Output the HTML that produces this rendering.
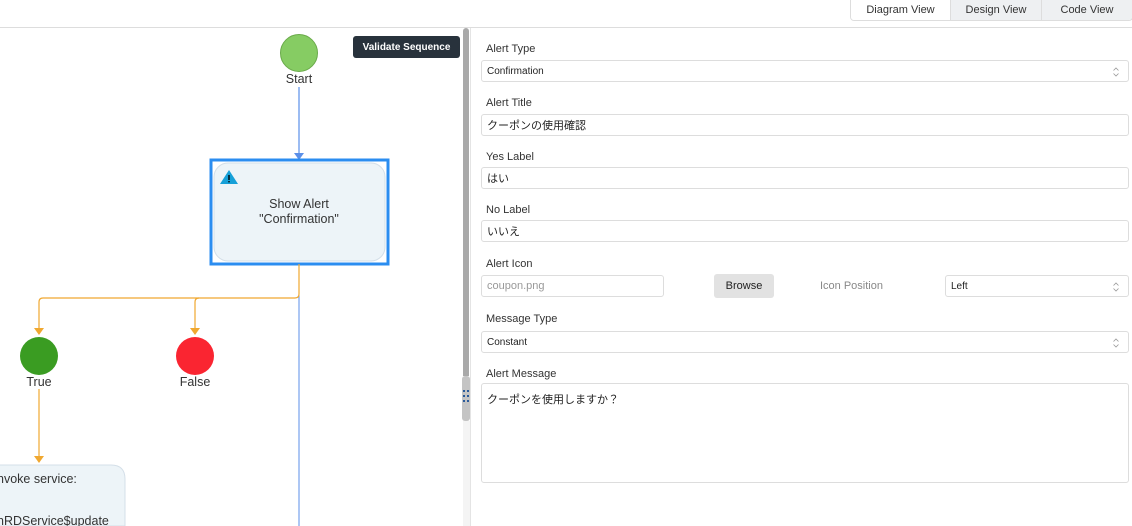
<!DOCTYPE html>
<html><head><meta charset="utf-8"><style>
*{box-sizing:border-box;margin:0;padding:0}
body{width:1132px;height:526px;overflow:hidden;background:#fff;font-family:"Liberation Sans","Noto Sans CJK JP",sans-serif;position:relative;color:#333}
.abs{position:absolute}
.tabs{left:850px;top:0;width:283px;height:21px;border:1px solid #ddd;border-top:none;border-radius:0 0 4px 4px;display:flex;font-size:11px;overflow:hidden}
.tabs div{flex:1;text-align:center;line-height:20px;border-left:1px solid #ddd;background:#eef0f2}
.tabs div:first-child{border-left:none;background:#fff;flex:1.1}
.lbl{font-size:11px;color:#333;left:486px}
.in{border:1px solid #ddd;border-radius:3px;height:22px;font-size:10px;display:flex;align-items:center;padding-left:5px;color:#222;background:#fff}
.arr{position:absolute;right:8px;top:5px}
</style></head><body>
<div class="abs" style="left:0;top:27px;width:1132px;height:1px;background:#ddd"></div>
<div class="abs tabs"><div>Diagram View</div><div>Design View</div><div>Code View</div></div>

<div class="abs" style="left:463px;top:28px;width:6px;height:348px;background:#a9a9a9;border-radius:3px 3px 0 0"></div>
<div class="abs" style="left:462px;top:376px;width:8px;height:45px;background:#c4c4c4;border-radius:3px"></div>
<div class="abs" style="left:463px;top:421px;width:7px;height:105px;background:#f4f4f4"></div>
<div class="abs" style="left:470px;top:28px;width:1px;height:498px;background:#e4e4e4"></div>
<svg class="abs" style="left:462px;top:388px" width="8" height="20"><g fill="#2a5a9a"><rect x="1" y="2" width="2" height="2"/><rect x="5" y="2" width="2" height="2"/><rect x="1" y="7" width="2" height="2"/><rect x="5" y="7" width="2" height="2"/><rect x="1" y="12" width="2" height="2"/><rect x="5" y="12" width="2" height="2"/></g></svg>

<div class="abs" style="left:353px;top:36px;width:107px;height:22px;background:#28323c;border-radius:3px;color:#fff;font-size:10px;font-weight:bold;display:flex;align-items:center;justify-content:center">Validate Sequence</div>

<svg class="abs" style="left:0;top:28px" width="460" height="498">
<circle cx="299" cy="25" r="18.5" fill="#86cc63" stroke="#6aaa4a"/>
<line x1="299" y1="59" x2="299" y2="127" stroke="#5b8fe8" stroke-width="1.2"/>
<path d="M294 125 L304 125 L299 132 Z" fill="#5b8fe8"/>
<rect x="211" y="132" width="177" height="104" fill="none" stroke="#2b8df0" stroke-width="3"/>
<rect x="214" y="135" width="171" height="98" rx="14" fill="#edf4f8" stroke="#d4dfe8"/>
<path d="M229 142 L238 156 L220 156 Z" fill="#16a0d8"/>
<rect x="228.3" y="147" width="1.4" height="5" fill="#000"/><rect x="228.3" y="153" width="1.4" height="1.4" fill="#000"/>
<line x1="299" y1="236" x2="299" y2="498" stroke="#5b8fe8" stroke-width="1"/>
<path d="M299 236 L299 266 Q299 270 295 270 L43 270 Q39 270 39 274 L39 302" fill="none" stroke="#f0a830" stroke-width="1.2"/>
<path d="M199 270 Q195 270 195 274 L195 302" fill="none" stroke="#f0a830" stroke-width="1.2"/>
<path d="M34 300 L44 300 L39 307 Z" fill="#f0a830"/>
<path d="M190 300 L200 300 L195 307 Z" fill="#f0a830"/>
<circle cx="39" cy="328" r="19" fill="#3a9c22"/>
<circle cx="195" cy="328" r="19" fill="#fa2531"/>
<line x1="39" y1="361" x2="39" y2="430" stroke="#f0a830" stroke-width="1.2"/>
<path d="M34 428 L44 428 L39 435 Z" fill="#f0a830"/>
<path d="M-10 437 L111 437 Q125 437 125 451 L125 498 L-10 498 Z" fill="#edf4f8" stroke="#d4dfe8"/>
<g font-family="Liberation Sans,sans-serif" font-size="12.5" fill="#333" text-anchor="middle">
<text x="299" y="55">Start</text>
<text x="299" y="180">Show Alert</text>
<text x="299" y="195">"Confirmation"</text>
<text x="39" y="358">True</text>
<text x="195" y="358">False</text>
<text x="-3" y="455" text-anchor="start">nvoke service:</text>
<text x="-3" y="497" text-anchor="start">nRDService$update</text>
</g>
</svg>

<div class="abs lbl" style="top:43px">Alert Type</div>
<div class="abs in" style="left:481px;top:60px;width:648px">Confirmation<svg class="arr" width="8" height="12"><path d="M1.5 4.5 L4 2 L6.5 4.5 M1.5 7.5 L4 10 L6.5 7.5" fill="none" stroke="#999" stroke-width="0.8"/></svg></div>
<div class="abs lbl" style="top:97px">Alert Title</div>
<div class="abs in" style="left:481px;top:114px;width:648px;font-size:11px">クーポンの使用確認</div>
<div class="abs lbl" style="top:151px">Yes Label</div>
<div class="abs in" style="left:481px;top:167px;width:648px;font-size:11px">はい</div>
<div class="abs lbl" style="top:204px">No Label</div>
<div class="abs in" style="left:481px;top:220px;width:648px;font-size:11px">いいえ</div>
<div class="abs lbl" style="top:258px">Alert Icon</div>
<div class="abs in" style="left:481px;top:275px;width:183px;color:#999;font-size:11px">coupon.png</div>
<div class="abs" style="left:714px;top:274px;width:60px;height:24px;background:#e2e2e2;border-radius:3px;font-size:11px;display:flex;align-items:center;justify-content:center;color:#222">Browse</div>
<div class="abs" style="left:820px;top:280px;font-size:11px;color:#888">Icon Position</div>
<div class="abs in" style="left:945px;top:275px;width:184px">Left<svg class="arr" width="8" height="12"><path d="M1.5 4.5 L4 2 L6.5 4.5 M1.5 7.5 L4 10 L6.5 7.5" fill="none" stroke="#999" stroke-width="0.8"/></svg></div>
<div class="abs lbl" style="top:313px">Message Type</div>
<div class="abs in" style="left:481px;top:331px;width:648px">Constant<svg class="arr" width="8" height="12"><path d="M1.5 4.5 L4 2 L6.5 4.5 M1.5 7.5 L4 10 L6.5 7.5" fill="none" stroke="#999" stroke-width="0.8"/></svg></div>
<div class="abs lbl" style="top:368px">Alert Message</div>
<div class="abs in" style="left:481px;top:383px;width:648px;height:100px;font-size:11px;padding-top:7px;align-items:flex-start">クーポンを使用しますか？</div>
</body></html>
